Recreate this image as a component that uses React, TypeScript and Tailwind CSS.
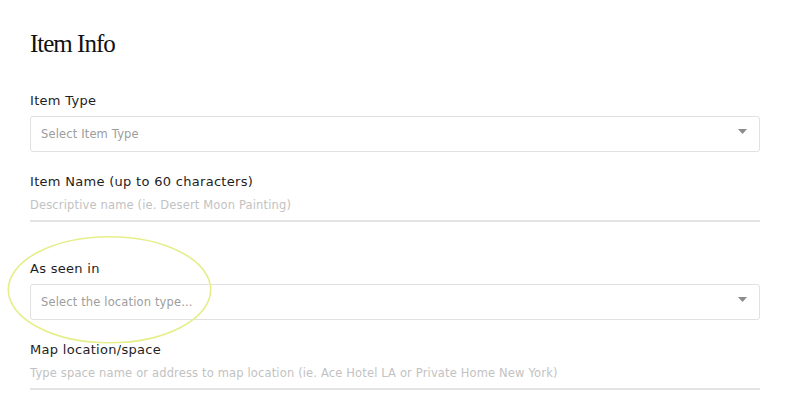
const SelectBox = ({ placeholder }: { placeholder: string }) => (
  <div className="mt-[7px] flex h-[36px] items-center justify-between rounded-[3px] border border-[#e1e1e1] bg-white pl-[10px] pr-[12px]">
    <span className="text-[11.5px] leading-[16px] tracking-[0.15px] text-[#9d9d9d]">{placeholder}</span>
    <svg width="9" height="5" viewBox="0 0 9 5" className="mb-[5px]">
      <path d="M0 0h9L4.5 5z" fill="#8c8c8c" />
    </svg>
  </div>
);

const TextField = ({ placeholder }: { placeholder: string }) => (
  <div className="mt-[7px] border-b-2 border-[#e3e3e3] pb-[7px]">
    <span className="block text-[11.5px] leading-[16px] tracking-[0.15px] text-[#c2c2c2]">{placeholder}</span>
  </div>
);

const Label = ({ text, className }: { text: string; className: string }) => (
  <div className={`text-[13px] leading-[16px] tracking-[0.3px] text-[#1e1e1e] ${className}`}>{text}</div>
);

export default function App() {
  return (
    <div className="relative min-h-[407px] w-[787px] bg-white font-['DejaVu_Sans',sans-serif]">
      <div className="ml-[30px] w-[730px] pt-[29px]">
        <h1 className="h-[30px] font-['Liberation_Serif',serif] text-[25px] leading-[30px] tracking-[-0.04em] text-[#111]">
          Item Info
        </h1>

        <Label text="Item Type" className="mt-[34px]" />
        <SelectBox placeholder="Select Item Type" />

        <Label text="Item Name (up to 60 characters)" className="mt-[22px]" />
        <TextField placeholder="Descriptive name (ie. Desert Moon Painting)" />

        <Label text="As seen in" className="mt-[39px]" />
        <SelectBox placeholder="Select the location type..." />

        <Label text="Map location/space" className="mt-[22px]" />
        <TextField placeholder="Type space name or address to map location (ie. Ace Hotel LA or Private Home New York)" />
      </div>

      {/* highlight annotation */}
      <svg
        className="pointer-events-none absolute left-[7px] top-[235px]"
        width="206"
        height="110"
        viewBox="0 0 206 110"
      >
        <ellipse cx="102.5" cy="54.7" rx="101.2" ry="53" fill="none" stroke="#e6ee8a" strokeWidth="1.6" />
      </svg>
    </div>
  );
}
